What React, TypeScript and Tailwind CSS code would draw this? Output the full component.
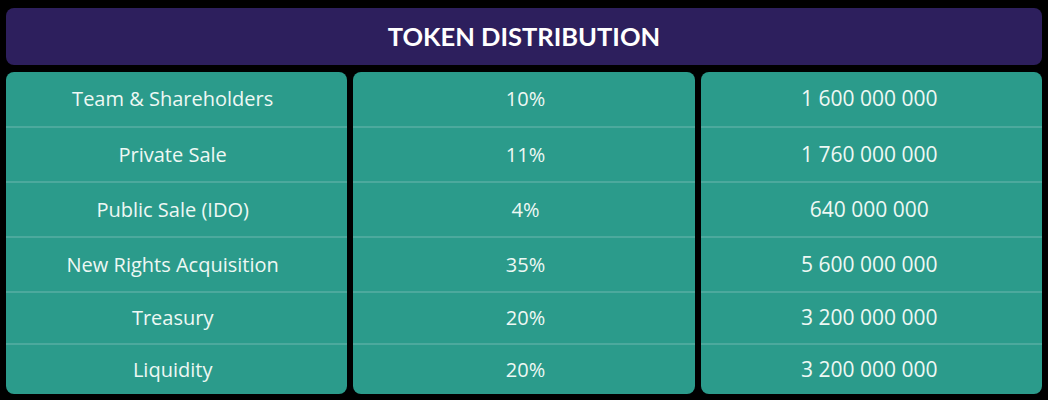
import React from "react";

// Token distribution table
const rows = [
  { name: "Team & Shareholders", pct: "10%", amount: "1 600 000 000" },
  { name: "Private Sale", pct: "11%", amount: "1 760 000 000" },
  { name: "Public Sale (IDO)", pct: "4%", amount: "640 000 000" },
  { name: "New Rights Acquisition", pct: "35%", amount: "5 600 000 000" },
  { name: "Treasury", pct: "20%", amount: "3 200 000 000" },
  { name: "Liquidity", pct: "20%", amount: "3 200 000 000" },
];

// row heights incl. the 2px divider, measured off the design
const heights = ["h-[56px]", "h-[55px]", "h-[55px]", "h-[55px]", "h-[52px]", "h-[49px]"];

const Column = ({ values, className }: { values: string[]; className: string }) => (
  <div className="flex h-[322px] flex-col overflow-hidden rounded-lg bg-[#2b9b8b]">
    {values.map((v, i) => (
      <div
        key={i}
        className={`flex shrink-0 items-center justify-center text-[#eef8f4] ${className} ${heights[i]} ${
          i < values.length - 1 ? "border-b-2 border-[#4ca99d]" : ""
        }`}
      >
        {v}
      </div>
    ))}
  </div>
);

export default function App() {
  return (
    <div
      className="h-[400px] w-[1048px] bg-black px-[6px] pt-[8px]"
      style={{ fontFamily: "'Open Sans', Lato, sans-serif" }}
    >
      <div className="flex h-[57px] items-center justify-center rounded-lg bg-[#2d1f5d]">
        <h1 className="text-[25.5px] font-bold text-white" style={{ fontFamily: "Lato, sans-serif" }}>
          TOKEN DISTRIBUTION
        </h1>
      </div>
      <div className="mt-[7px] grid grid-cols-3 gap-[6px]">
        <Column values={rows.map((r) => r.name)} className="pr-[8px] text-[20px]" />
        <Column values={rows.map((r) => r.pct)} className="pl-[3px] text-[20px]" />
        <Column values={rows.map((r) => r.amount)} className="pr-[4px] text-[21px]" />
      </div>
    </div>
  );
}
